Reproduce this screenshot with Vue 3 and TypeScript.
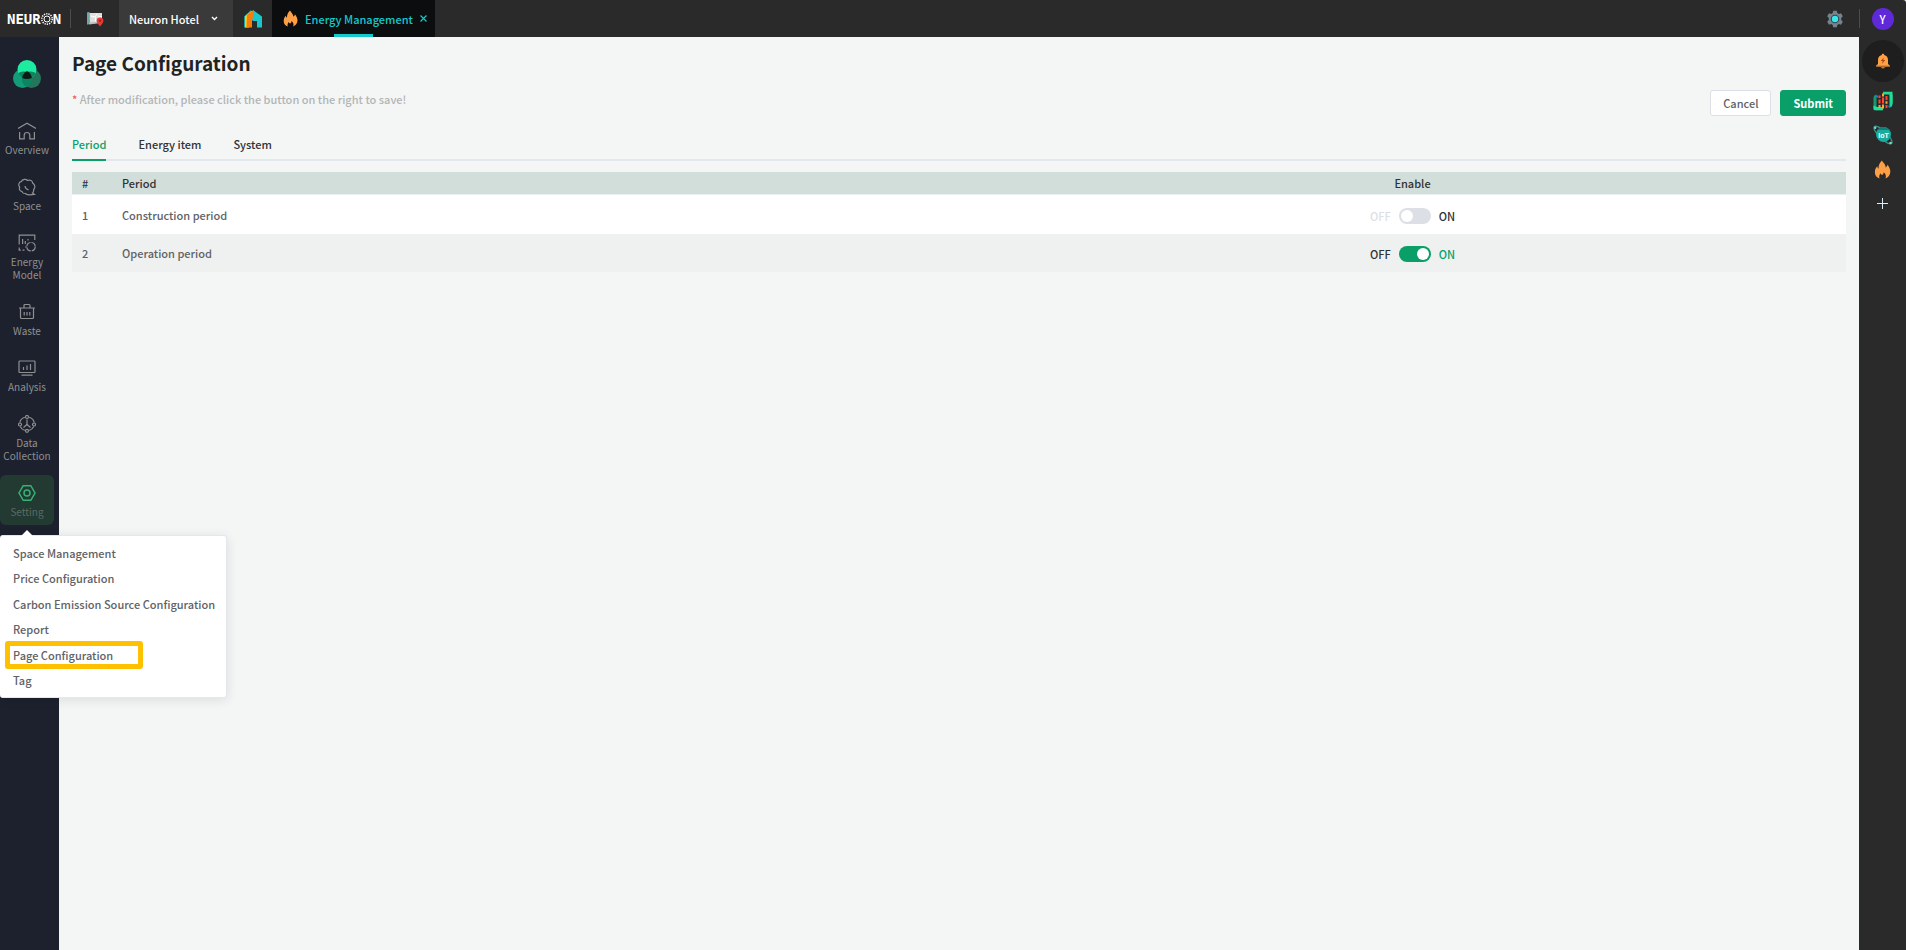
<script setup lang="ts">
import { ref } from 'vue'

interface NavItem { id: string; label: string }
interface PeriodRow { name: string; enabled: boolean }

const navItems: NavItem[] = [
  { id: 'overview', label: 'Overview' },
  { id: 'space', label: 'Space' },
  { id: 'energy', label: 'Energy Model' },
  { id: 'waste', label: 'Waste' },
  { id: 'analysis', label: 'Analysis' },
  { id: 'data', label: 'Data Collection' },
  { id: 'setting', label: 'Setting' },
]
const activeNav = 'setting'

const settingLinks: string[] = [
  'Space Management',
  'Price Configuration',
  'Carbon Emission Source Configuration',
  'Report',
  'Page Configuration',
  'Tag',
]
const markedLink = 'Page Configuration'

const tabs: string[] = ['Period', 'Energy item', 'System']
const activeTab = ref('Period')

const site = ref('Neuron Hotel')

const rows = ref<PeriodRow[]>([
  { name: 'Construction period', enabled: false },
  { name: 'Operation period', enabled: true },
])
</script>

<template>
  <div class="shell">
    <header class="topbar">
      <a class="brand" href="#" aria-label="Neuron">
        <span>NEUR</span>
        <svg class="brand-o" viewBox="0 0 12 12" aria-hidden="true">
          <circle cx="6" cy="6" r="3" fill="none" stroke="#fff" stroke-width="1" />
          <circle cx="6" cy="6" r="5.2" fill="none" stroke="#fff" stroke-width="1.5" stroke-dasharray="1.3 1" />
        </svg>
        <span>N</span>
      </a>
      <span class="divider"></span>
      <button class="map-btn" type="button" aria-label="Map">
        <svg width="18" height="16" viewBox="0 0 18 16" aria-hidden="true">
          <path d="M2 2 16 2v9L4 13z" fill="#dedede" />
          <path d="M5 5l4 1 2-3M9 6l1 5M12 5l4 1" stroke="#fff" stroke-width="1" fill="none" />
          <path d="M1 1.5Q2.6.4 3.8 1.5V11L2.4 13.6Q1 14 1 12.5z" fill="#75a5a5" />
          <path d="M3 11.5 15 10.6V12L3 13.6z" fill="#bcbcbc" />
          <path d="M14 15.6C11.5 12.6 10.6 11.2 10.6 9.8a3.4 3.4 0 0 1 6.8 0c0 1.4-.9 2.8-3.4 5.8z" fill="#e83a36" />
          <circle cx="14" cy="9.8" r="1.3" fill="#b3211f" />
        </svg>
      </button>
      <div class="site">
        <select v-model="site" aria-label="Site">
          <option>Neuron Hotel</option>
        </select>
        <svg class="chevron" width="7" height="5" viewBox="0 0 7 5" aria-hidden="true">
          <path d="M1 1l2.5 2.5L6 1" stroke="#fff" stroke-width="1.4" fill="none" />
        </svg>
      </div>
      <button class="home-btn" type="button" aria-label="Home">
        <svg width="20" height="20" viewBox="0 0 20 20" aria-hidden="true">
          <path d="M1 7.5 8 1v3L4.500 18.500H1z" fill="#1aa39a" />
          <path d="M2 7.200 9 1.500v6L6 18.500H2z" fill="#f3d11b" />
          <path d="M4 6 10.500 1V11H9v7.500H3.500z" fill="#fb7a0c" />
          <path d="M10 1l9 6.500v11h-5V12H9.500V10L10 7z" fill="#19c8cc" />
        </svg>
      </button>
      <div class="app-tab">
        <svg width="15" height="17" viewBox="0 0 15 17" aria-hidden="true">
          <path d="M7 .5c.8 1.8 3.400 3.300 3.300 6.100.9-.4 1.500-1.200 1.600-2.300C13.400 6.200 14.500 8 14.500 10.600c0 3-2 5.100-4.300 5.900.8-2.200.2-4.200-1.600-5.600-.1 1.400-.8 2-1.600 2.600-.7-.4-1-.9-1.100-1.600C4.500 13.300 4.300 14.900 4.800 16.500 2.300 15.700.7 13.800.7 11 .7 8.600 1.500 7 2.800 5.700c.1 1 .5 1.700 1.100 2.100C3.900 4.700 5 2.500 7 .5z" fill="#ff9f45" />
        </svg>
        <a href="#">Energy Management</a>
        <button type="button" aria-label="Close tab">
          <svg width="7" height="7" viewBox="0 0 7 7" aria-hidden="true">
            <path d="M.5.5l6 6M6.500.5l-6 6" stroke="#15c8cc" stroke-width="1.200" />
          </svg>
        </button>
      </div>
      <div class="topbar-end">
        <button class="gear-btn" type="button" aria-label="System settings">
          <svg width="18" height="18" viewBox="0 0 18 18" aria-hidden="true">
            <path d="M7.200.8h3.600l.5 2.200 1.500.9 2.200-.7 1.800 3.100-1.600 1.600v2.200l1.600 1.600-1.800 3.100-2.200-.7-1.500.9-.5 2.200H7.200L6.700 15l-1.500-.9-2.200.7-1.800-3.100 1.600-1.600V7.900L1.200 6.300 3 3.200l2.200.7L6.700 3z" fill="#77838c" />
            <circle cx="9" cy="9" r="4.300" fill="#35444d" />
            <circle cx="9" cy="9" r="3.200" fill="#37e6ea" />
          </svg>
        </button>
        <div class="avatar-cell"><button class="avatar" type="button">Y</button></div>
      </div>
    </header>

    <div class="body">
      <aside class="sidebar">
        <svg class="trefoil" width="30" height="30" viewBox="0 0 30 30" aria-hidden="true">
          <circle cx="10.500" cy="19.500" r="9.500" fill="#139c77" />
          <circle cx="19.500" cy="19.500" r="9.500" fill="#24765b" />
          <circle cx="15" cy="10.500" r="9.500" fill="#1ceba0" />
          <path d="M6.200 14A9.500 9.500 0 0 1 19.800 17.500a9.500 9.500 0 0 1-4.800 10.400A9.500 9.500 0 0 1 10.200 17.500 9.500 9.500 0 0 1 23.800 14 9.500 9.500 0 0 1 15 20 9.500 9.500 0 0 1 6.200 14z" fill="#0c8562" />
          <path d="M15 12C17.800 13.500 19.600 16 19.800 19c-3 1.400-6.600 1.400-9.600 0C10.400 16 12.200 13.500 15 12z" fill="#0d1a16" />
        </svg>
        <nav class="nav" aria-label="Main">
          <a v-for="item in navItems" :key="item.id" href="#" class="nav-item" :class="{ active: item.id === activeNav }">
            <svg width="18" height="18" viewBox="0 0 18 18" fill="none" stroke="currentColor" stroke-width="1.200" aria-hidden="true">
              <template v-if="item.id === 'overview'">
                <path d="M0 6.500 9 1.200l9 5.300M1.600 10v6.900h4.600v-3.600a2.800 2.800 0 0 1 5.600 0v3.600h4.600V10" />
              </template>
              <template v-else-if="item.id === 'space'">
                <path d="M4 13.600C1.600 13 .8 11 1.700 9.200 0 7 .7 4.200 3.200 3.700 4.500.9 8 .6 9.600 2.500c2.700-1 4.800.3 5.100 2.600 2.400 1.300 2.800 4.500 1 6.400.1 1.700-.4 2.800-1.200 3.400l2 1.500c-4 .8-7.500.5-9.300-.9-1.300 0-2.700-.6-3.200-1.900zM7 8q.2 2.800 3.600 4" />
              </template>
              <template v-else-if="item.id === 'energy'">
                <path d="M16.800 6V1.200H1.200v9.400M1.200 13.500v2.600h1.600M4.500 16.100h2M4.600 5v5M7.300 7v3M10 5v1.500M7 13h1.500" />
                <circle cx="13" cy="12.700" r="4.200" stroke-dasharray="5.600 1" />
              </template>
              <template v-else-if="item.id === 'waste'">
                <path d="M1 5h16M2.500 5v9.500q0 1 1 1h11q1 0 1-1V5M6 5V2.500q0-1 1-1h4q1 0 1 1V5M6.200 9v3.500M9 9v3.500M11.800 9v3.500" />
              </template>
              <template v-else-if="item.id === 'analysis'">
                <rect x="1" y="2" width="16" height="11.500" rx=".8" />
                <path d="M3.500 16.200h11M5.500 8v3M9 6.500V11M12.500 5v6" />
              </template>
              <template v-else-if="item.id === 'data'">
                <path d="M6.800 2.300C4 3.200 2.200 5.100 1.900 7.500M11.200 2.300C14 3.200 15.800 5.100 16.100 7.500M2.200 11.500c1 2 2.600 3.300 4.600 3.900M15.800 11.500c-1 2-2.600 3.300-4.600 3.900M9 4.500v5M9 9.500l-3.500 3M9 9.500l3.500 3" />
                <circle cx="9" cy="2" r="1.500" /><circle cx="2" cy="9.500" r="1.500" /><circle cx="16" cy="9.500" r="1.500" /><circle cx="9" cy="15.800" r="1.500" />
              </template>
              <template v-else>
                <path d="M5.200 1.700h7.600L17 9l-4.200 7.300H5.200L1 9z" stroke-width="1.500" />
                <circle cx="9" cy="9" r="3" stroke-width="1.500" />
              </template>
            </svg>
            <span>{{ item.label }}</span>
          </a>
        </nav>
        <nav class="flyout" aria-label="Setting">
          <a v-for="link in settingLinks" :key="link" href="#" :class="{ marked: link === markedLink }">{{ link }}</a>
        </nav>
      </aside>

      <main class="content">
        <div class="page-head">
          <div>
            <h1>Page Configuration</h1>
            <p class="hint"><span class="star">*</span> After modification, please click the button on the right to save!</p>
          </div>
          <div class="actions">
            <button class="btn" type="button">Cancel</button>
            <button class="btn primary" type="button">Submit</button>
          </div>
        </div>

        <div class="tabs" role="tablist">
          <button v-for="tab in tabs" :key="tab" type="button" role="tab" :aria-selected="tab === activeTab" :class="{ active: tab === activeTab }" @click="activeTab = tab">{{ tab }}</button>
        </div>

        <table>
          <colgroup><col class="col-index" /><col /><col /></colgroup>
          <thead>
            <tr><th>#</th><th>Period</th><th class="center">Enable</th></tr>
          </thead>
          <tbody>
            <tr v-for="(row, i) in rows" :key="row.name">
              <td>{{ i + 1 }}</td>
              <td>{{ row.name }}</td>
              <td class="center">
                <label class="switch" :class="{ on: row.enabled }">
                  <span class="off-text">OFF</span>
                  <input v-model="row.enabled" type="checkbox" role="switch" :aria-label="row.name" />
                  <span class="on-text">ON</span>
                </label>
              </td>
            </tr>
          </tbody>
        </table>
      </main>

      <aside class="rail">
        <button class="rail-btn bell" type="button" aria-label="Alarms">
          <svg width="16" height="16" viewBox="0 0 16 16" aria-hidden="true">
            <path d="M8 .8c.8 0 1.200.5 1.200 1.200C11.800 2.600 13 4.500 13 7v4l1.800 1.600v1H1.200v-1L3 11V7c0-2.500 1.200-4.400 3.800-5C6.800 1.300 7.200.8 8 .8z" fill="#ffa143" />
            <path d="M1.200 12.600h13.600v1H1.200zM6 14h4q-.4 1.600-2 1.600T6 14z" fill="#c9742b" />
            <path d="M8.700 4.500 5.800 8h1.900l-.6 3 3.100-4H8.300z" fill="#a5461a" />
          </svg>
        </button>
        <button class="rail-btn" type="button" aria-label="Monitoring">
          <svg width="20" height="20" viewBox="0 0 20 20" aria-hidden="true">
            <path d="M10 .8h9.500V13q0 3-3 3.500V3.500H10z" fill="#1fdc93" />
            <path d="M3.500 3.500V16H10v3.200H.5V7q0-3 3-3.500z" fill="#159a6c" />
            <path d="M.5 14.500 4 16h6v3.200H3q-2.500 0-2.500-2.500zM16.500 3.500h3v10z" fill="#20e09a" />
            <path d="M5.500 8.500h2v4h-2zM5.500 4.500h2v2.500h-2zM9 6.500h2v6H9zM12.500 5h2v4h-2zM12.500 14h2v3h-2z" fill="#ff4338" />
            <path d="M9 2.500h2v3H9zM9 13.500h2v4H9zM5.500 14h2v3h-2zM12.500 10.200h2v2.600h-2z" fill="#f7a928" />
            <path d="M3.200 4.500h1.800v2H3.200zM15.500 14.500h1.800v2h-1.800z" fill="#2878ff" />
          </svg>
        </button>
        <button class="rail-btn" type="button" aria-label="IoT">
          <svg width="22" height="22" viewBox="0 0 22 22" aria-hidden="true">
            <ellipse cx="11" cy="11" rx="12" ry="3.800" transform="rotate(44 11 11)" fill="none" stroke="#3b9386" stroke-width="1.300" />
            <circle cx="11.500" cy="10.500" r="7.500" fill="#19ada0" />
            <path d="M5.500 5.900a7.500 7.500 0 0 1 12 0z" fill="#147f78" />
            <circle cx="3.200" cy="3.800" r="1.200" fill="#79d9c7" /><circle cx="18.500" cy="19" r="1.300" fill="#79d9c7" />
            <text x="11.500" y="13.500" text-anchor="middle" class="iot">IoT</text>
          </svg>
        </button>
        <button class="rail-btn" type="button" aria-label="Energy Management">
          <svg width="17" height="19" viewBox="0 0 15 17" aria-hidden="true">
            <path d="M7 .5c.8 1.800 3.400 3.300 3.300 6.100.9-.4 1.500-1.200 1.600-2.300C13.400 6.200 14.500 8 14.500 10.600c0 3-2 5.100-4.300 5.900.8-2.200.2-4.200-1.600-5.600-.1 1.400-.8 2-1.600 2.600-.7-.4-1-.9-1.100-1.600C4.500 13.300 4.300 14.900 4.800 16.500 2.300 15.700.7 13.800.7 11 .7 8.600 1.500 7 2.800 5.700c.1 1 .5 1.700 1.100 2.100C3.900 4.700 5 2.500 7 .5z" fill="#ff9f45" />
          </svg>
        </button>
        <button class="rail-btn" type="button" aria-label="Add">
          <svg width="11" height="11" viewBox="0 0 11 11" aria-hidden="true"><path d="M0 5.500h11M5.500 0v11" stroke="#d5eef8" stroke-width="1" /></svg>
        </button>
      </aside>
    </div>
  </div>
</template>

<style>
body { margin: 0; background: #f4f6f5; }
</style>

<style scoped>
*, *::before, *::after { box-sizing: border-box; }
.shell {
  display: flex;
  flex-direction: column;
  min-height: 100vh;
  font-family: "Noto Sans CJK SC", "Noto Sans", sans-serif;
  font-size: 11px;
  font-weight: 500;
  line-height: 18px;
  color: #606266;
}
button, select { font: inherit; color: inherit; border: 0; padding: 0; margin: 0; background: none; cursor: pointer; }
a { color: inherit; text-decoration: none; }
svg { display: block; flex: none; }

.topbar {
  display: flex;
  align-items: center;
  height: 37px;
  background: #2a2a2a;
  color: #fff;
  border-top-right-radius: 3px;
}
.brand {
  display: flex;
  align-items: center;
  flex: none;
  width: 70px;
  padding-left: 7px;
  font-family: "DejaVu Sans Mono", monospace;
  font-size: 14px;
  font-weight: 700;
}
.brand-o { width: 12px; height: 12px; }
.divider { width: 1px; height: 19px; background: #4c4c4c; }
.map-btn { display: flex; justify-content: center; width: 48px; }
.site { display: flex; align-items: center; align-self: stretch; width: 114px; padding-left: 10px; background: #3a3a3a; }
.site select { width: 82px; appearance: none; outline: 0; }
.site option { color: #222; }
.chevron { pointer-events: none; }
.home-btn { display: flex; justify-content: center; width: 39px; }
.app-tab {
  display: flex;
  align-items: center;
  align-self: stretch;
  gap: 7px;
  width: 163px;
  padding-left: 11px;
  background: linear-gradient(#15c8cc, #15c8cc) 62px 100% / 39px 3px no-repeat #0b0d0e;
  color: #15c8cc;
  white-space: nowrap;
}
.topbar-end { display: flex; align-items: center; margin-left: auto; }
.gear-btn { margin-right: 15px; }
.avatar-cell { display: flex; justify-content: center; width: 47px; background: linear-gradient(#4c4c4c, #4c4c4c) 0 50% / 1px 19px no-repeat; }
.avatar { width: 22px; height: 22px; border-radius: 50%; background: #5f29d9; color: #fff; line-height: 22px; }

.body { display: flex; flex: 1; }
.sidebar { position: relative; flex: none; width: 59px; padding-top: 22px; background: #1c212d; }
.trefoil { margin-left: 12px; }
.nav { display: flex; flex-direction: column; gap: 6px; width: 54px; margin-top: 24px; }
.nav-item {
  display: flex;
  flex-direction: column;
  align-items: center;
  gap: 3px;
  padding: 9px 2px 7px;
  border-radius: 6px;
  color: #8f9092;
  font-size: 10px;
  font-weight: 400;
  line-height: 13px;
  text-align: center;
}
.nav-item.active { background: #223a31; }
.nav-item.active svg { color: #35b277; }
.nav-item.active span { color: #5c6a65; }

.flyout {
  position: absolute;
  z-index: 2;
  top: 498px;
  left: 0;
  display: grid;
  grid-auto-rows: 1fr;
  height: 163px;
  padding: 4px 11px 4px 13px;
  border: 1px solid #e4e7ed;
  border-left: 0;
  border-radius: 3px;
  background: #fff;
  box-shadow: 0 2px 12px rgba(0, 0, 0, .1);
  white-space: nowrap;
}
.flyout::before {
  content: "";
  position: absolute;
  top: -6px;
  left: 21px;
  border: 6px solid transparent;
  border-top: 0;
  border-bottom-color: #fff;
}
.flyout a { position: relative; display: flex; align-items: center; }
.flyout .marked::after {
  content: "";
  position: absolute;
  inset: -1px auto -1px -8px;
  width: 138px;
  border: 5px solid #ffc000;
  border-radius: 3px;
}

.content { flex: 1; min-width: 0; padding: 12px 13px 0; background: #f4f6f5; }
.page-head { display: flex; justify-content: space-between; align-items: flex-end; }
h1 { margin: 0; font-size: 19px; line-height: 28px; font-weight: 700; color: #1f2323; }
.hint { margin: 13px 0 0; color: #b3b5b5; }
.star { color: #f2545b; }
.actions { display: flex; gap: 9px; margin-bottom: -8px; }
.btn { height: 26px; padding: 0 12px; border: 1px solid #dcdfe6; border-radius: 3px; background: #fff; line-height: 24px; }
.btn.primary { border-color: #0a9f68; background: #0a9f68; color: #fff; font-weight: 700; }

.tabs { display: flex; gap: 32px; margin-top: 27px; box-shadow: inset 0 -2px #e4e7ed; }
.tabs button { padding: 0 0 6px; border-bottom: 2px solid transparent; color: #303133; }
.tabs button.active { color: #0a9f68; border-bottom-color: #0a9f68; }

table { width: 100%; margin-top: 11px; table-layout: fixed; border-collapse: separate; border-spacing: 0; }
.col-index { width: 40px; }
th, td { padding: 0 10px; text-align: left; font-weight: 500; }
th { height: 23px; padding-bottom: 1px; background: #d2deda; border-bottom: 1px solid #ebeef5; color: #303133; }
td { height: 39px; background: #fff; }
tr:nth-child(2) td { height: 38px; background: #eff1f0; }
th.center, td.center { text-align: center; }
.switch { display: inline-flex; align-items: center; gap: 8px; vertical-align: middle; color: #303133; }
.switch input {
  appearance: none;
  display: flex;
  align-items: center;
  width: 32px;
  height: 16px;
  margin: 0;
  padding: 0 2px;
  border-radius: 8px;
  background: #dcdfe6;
  cursor: pointer;
}
.switch input::before { content: ""; width: 12px; height: 12px; border-radius: 50%; background: #fff; }
.switch input:checked { justify-content: flex-end; background: #0a9f68; }
.switch:not(.on) .off-text { color: #dcdfe6; }
.switch.on .on-text { color: #0a9f68; }

.rail { display: flex; flex-direction: column; align-items: center; flex: none; width: 47px; padding-top: 3px; background: #2a2a2a; }
.rail-btn { display: flex; align-items: center; justify-content: center; width: 34px; height: 34px; }
.rail-btn.bell { width: 42px; height: 42px; margin-bottom: 2px; border-radius: 50%; background: #1e1e1e; }
.iot { font: 700 7px "Liberation Sans", sans-serif; fill: #fff; }
</style>
